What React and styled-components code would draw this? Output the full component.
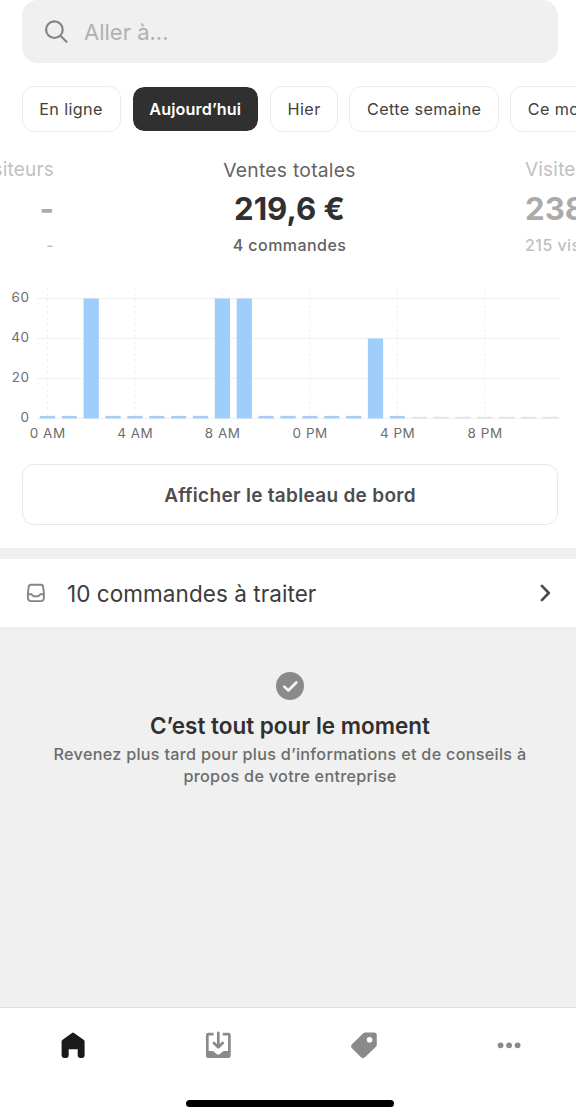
import React, { useState } from "react";
import styled, { createGlobalStyle } from "styled-components";

const periods = ["En ligne", "Aujourd’hui", "Hier", "Cette semaine", "Ce mois-ci"];

// sales per hour, null for the hours still to come
const sales = [
  0, 0, 60, 0, 0, 0, 0, 0, 60, 60, 0, 0, 0, 0, 0, 40, 0,
  null, null, null, null, null, null, null,
];
const hours = ["0 AM", "4 AM", "8 AM", "0 PM", "4 PM", "8 PM"];

const SalesChart = () => {
  const base = 133.5;
  const step = 21.87;
  const center = (i) => 47.4 + i * step;
  return (
    <Chart viewBox="0 0 576 160">
      {[0, 20, 40, 60].map((value) => (
        <g key={value}>
          <line
            x1="37"
            x2="561"
            y1={base - value * 2}
            y2={base - value * 2}
            stroke="#f0f0f0"
          />
          <text x="29.5" y={base - value * 2 + 3.7} textAnchor="end">
            {value}
          </text>
        </g>
      ))}
      {hours.map((hour, i) => (
        <g key={hour}>
          <line
            x1={center(i * 4)}
            x2={center(i * 4)}
            y1="2"
            y2={base}
            stroke="#f0f0f0"
            strokeDasharray="3 3"
          />
          <text x={center(i * 4) + 0.3} y="153.4" textAnchor="middle">
            {hour}
          </text>
        </g>
      ))}
      {sales.map((value, i) => {
        const height = value === null ? 1.7 : Math.max(value * 2, 2.6);
        return (
          <rect
            key={i}
            x={center(i) - 7.6}
            y={base - height}
            width="15.3"
            height={height}
            fill={value === null ? "#e2e2e2" : value ? "#a0cefb" : "#aacdf3"}
          />
        );
      })}
    </Chart>
  );
};

const App = () => {
  const [period, setPeriod] = useState("Aujourd’hui");

  return (
    <Screen>
      <GlobalStyle />
      <Search>
        <svg width="24" height="24" viewBox="0 0 24 24" fill="none" stroke="#848484" strokeWidth="2.2">
          <circle cx="10.4" cy="9.7" r="8.3" />
          <path d="M16.4 15.7l6.1 6.1" strokeLinecap="round" />
        </svg>
        <span>Aller à...</span>
      </Search>

      <Periods>
        {periods.map((name) => (
          <Chip key={name} $active={name === period} onClick={() => setPeriod(name)}>
            {name}
          </Chip>
        ))}
      </Periods>

      <Metrics>
        <Metric $side="left">
          <MetricName $small>Visiteurs</MetricName>
          <MetricValue>-</MetricValue>
          <MetricDetail>-</MetricDetail>
        </Metric>
        <Metric>
          <MetricName>Ventes totales</MetricName>
          <MetricValue>219,6 €</MetricValue>
          <MetricDetail>4 commandes</MetricDetail>
        </Metric>
        <Metric $side="right">
          <MetricName $small>Visiteurs</MetricName>
          <MetricValue>238</MetricValue>
          <MetricDetail>215 visiteurs</MetricDetail>
        </Metric>
      </Metrics>

      <SalesChart />

      <DashboardButton>Afficher le tableau de bord</DashboardButton>

      <OrdersRow>
        <svg width="20" height="20" viewBox="0 0 20 20" fill="none" stroke="#858585" strokeWidth="1.9">
          <path d="M5 1.8h9.8a2.3 2.3 0 0 1 2.3 2l.8 6.2v5.1a3 3 0 0 1-3 3H4.9a3 3 0 0 1-3-3V10l.8-6.2a2.3 2.3 0 0 1 2.3-2z" />
          <path d="M1.9 11.3h3.7l1.7 1.9h5.2l1.7-1.9h3.7" strokeLinejoin="round" />
        </svg>
        <OrdersText>10 commandes à traiter</OrdersText>
        <svg width="12" height="18" viewBox="0 0 12 18" fill="none" stroke="#4b4b4b" strokeWidth="2.7">
          <path d="M1.9 1.9L8.8 9l-6.9 7.1" strokeLinecap="round" strokeLinejoin="round" />
        </svg>
      </OrdersRow>

      <Empty>
        <svg width="28" height="28" viewBox="0 0 28 28">
          <circle cx="14" cy="14" r="14" fill="#8a8a8a" />
          <path
            d="M8.3 14.6l4 3.9 8-8"
            fill="none"
            stroke="#f4f4f4"
            strokeWidth="2.7"
            strokeLinecap="round"
            strokeLinejoin="round"
          />
        </svg>
        <EmptyTitle>C’est tout pour le moment</EmptyTitle>
        <EmptyText>
          Revenez plus tard pour plus d’informations et de conseils à
          <br />
          propos de votre entreprise
        </EmptyText>
      </Empty>

      <Footer>
        <Tabs>
          <Tab $active>
            <svg width="26" height="28" viewBox="0 0 26 28" fill="currentColor">
              <path d="M12 1.9a1.7 1.7 0 0 1 2 0l9.6 6.8a2.2 2.2 0 0 1 1 1.8v14.1a2.3 2.3 0 0 1-2.3 2.3h-2.3a2.3 2.3 0 0 1-2.3-2.3v-6.4H8.7v6.4a2.3 2.3 0 0 1-2.3 2.3H3.9a2.3 2.3 0 0 1-2.3-2.3V10.5a2.2 2.2 0 0 1 1-1.8z" />
            </svg>
          </Tab>
          <Tab>
            <svg width="26" height="28" viewBox="0 0 26 28" fill="none" stroke="currentColor" strokeWidth="2.7">
              <path d="M8.6 3.1H3.3a1 1 0 0 0-1 1v17M17.8 3.1h5.6a1 1 0 0 1 1 1v17" />
              <path d="M1 20h6.9l3.8 2.9a2.6 2.6 0 0 0 3.2 0l3.8-2.9h7v5a2 2 0 0 1-2 2H3a2 2 0 0 1-2-2z" fill="currentColor" stroke="none" />
              <path d="M13.3 1.8v14M8.9 12l4.4 4.3 4.4-4.3" strokeLinecap="round" strokeLinejoin="round" />
            </svg>
          </Tab>
          <Tab>
            <svg width="26" height="28" viewBox="0 0 26 28" fill="currentColor">
              <path
                fillRule="evenodd"
                d="M14.2 1.6h8.8a2.8 2.8 0 0 1 2.8 2.8v9.1a3.2 3.2 0 0 1-.9 2.2L14.2 26.1a3.2 3.2 0 0 1-4.5 0L1.2 17.6a3.2 3.2 0 0 1 0-4.5L12 2.5a3.2 3.2 0 0 1 2.2-.9zM18.6 5.9a2.8 2.8 0 1 0 0 5.6 2.8 2.8 0 0 0 0-5.6z"
              />
            </svg>
          </Tab>
          <Tab>
            <svg width="26" height="28" viewBox="0 0 26 28" fill="currentColor">
              <circle cx="4.6" cy="14.3" r="2.9" />
              <circle cx="13.1" cy="14.3" r="2.9" />
              <circle cx="21.6" cy="14.3" r="2.9" />
            </svg>
          </Tab>
        </Tabs>
        <HomeIndicator />
      </Footer>
    </Screen>
  );
};

export default App;

const GlobalStyle = createGlobalStyle`
  * {
    box-sizing: border-box;
  }
  body {
    margin: 0;
    background: #fff;
    font-family: Inter, "Liberation Sans", sans-serif;
  }
  button {
    font-family: inherit;
  }
  svg {
    flex-shrink: 0;
  }
`;

const Screen = styled.div`
  width: 576px;
  height: 1117px;
  display: flex;
  flex-direction: column;
  overflow: hidden;
`;

const Search = styled.div`
  height: 63px;
  margin: 0 18px 0 22px;
  padding: 1px 22px 0;
  display: flex;
  align-items: center;
  gap: 16px;
  flex-shrink: 0;
  border-radius: 16px;
  background: #f0f0f0;
  color: #b1b1b1;
  font-size: 22px;
`;

const Periods = styled.div`
  display: flex;
  gap: 11px;
  margin-top: 22.5px;
  padding-left: 21.5px;
`;

const Chip = styled.button`
  height: 46px;
  padding: 0 ${({ $active }) => ($active ? "16.8px" : "16.7px")};
  flex-shrink: 0;
  border: 1px solid ${({ $active }) => ($active ? "#fff" : "#ececec")};
  border-radius: 12px;
  background: ${({ $active }) => ($active ? "#303030" : "#fff")};
  background-clip: padding-box;
  color: ${({ $active }) => ($active ? "#fff" : "#414141")};
  font-size: 16.2px;
  font-weight: ${({ $active }) => ($active ? 600 : 400)};
  letter-spacing: ${({ $active }) => ($active ? "0.1px" : "0.38px")};
`;

const Metrics = styled.div`
  display: grid;
  grid-template-columns: 54px 471px 51px;
  margin-top: 24px;
`;

const Metric = styled.div`
  display: flex;
  flex-direction: column;
  align-items: ${({ $side }) =>
    $side === "left" ? "flex-end" : $side === "right" ? "flex-start" : "center"};
  opacity: ${({ $side }) => ($side ? 0.4 : 1)};
  white-space: nowrap;
`;

const MetricName = styled.div`
  color: #646464;
  font-size: ${({ $small }) => ($small ? "19px" : "19.3px")};
  letter-spacing: ${({ $small }) => ($small ? "0.2px" : "0.25px")};
  line-height: 28px;
`;

const MetricValue = styled.div`
  color: #303030;
  font-size: 31.2px;
  font-weight: 700;
  line-height: 50px;
`;

const MetricDetail = styled.div`
  color: #626262;
  font-size: 16px;
  font-weight: 500;
  letter-spacing: 0.45px;
  line-height: 22px;
`;

const Chart = styled.svg`
  width: 576px;
  height: 160px;
  margin-top: 29px;

  text {
    fill: #6e6e6e;
    font-size: 13.5px;
    letter-spacing: 0.5px;
  }
`;

const DashboardButton = styled.button`
  height: 61px;
  margin: 19px 18px 23px 22px;
  padding-top: 3px;
  flex-shrink: 0;
  border: 1px solid #e8e8e8;
  border-radius: 12px;
  background: #fff;
  color: #4d4d4d;
  font-size: 19px;
  font-weight: 600;
  letter-spacing: 0.3px;
`;

const OrdersRow = styled.div`
  height: 79px;
  padding: 0 24px 0 26px;
  display: flex;
  align-items: center;
  flex-shrink: 0;
  border-top: 11px solid #f0f0f0;
`;

const OrdersText = styled.div`
  flex: 1;
  margin: 1px 0 0 21px;
  color: #3c3c3c;
  font-size: 22.5px;
  letter-spacing: 0.06px;
`;

const Empty = styled.div`
  flex: 1;
  padding: 45px 0 0 4px;
  display: flex;
  flex-direction: column;
  align-items: center;
  background: #f0f0f0;
  text-align: center;
`;

const EmptyTitle = styled.div`
  margin-top: 11px;
  color: #303030;
  font-size: 22.5px;
  font-weight: 600;
  line-height: 30px;
`;

const EmptyText = styled.div`
  margin-top: 2px;
  color: #6c6c6c;
  font-size: 16.2px;
  font-weight: 500;
  letter-spacing: 0.29px;
  line-height: 22.4px;
  white-space: nowrap;
`;

const Footer = styled.div`
  height: 110px;
  flex-shrink: 0;
  border-top: 1px solid #dedede;
  background: #fff;
`;

const Tabs = styled.div`
  height: 74px;
  display: grid;
  grid-template-columns: repeat(4, 145.5px);
`;

const Tab = styled.div`
  display: flex;
  align-items: center;
  justify-content: center;
  color: ${({ $active }) => ($active ? "#1a1a1a" : "#8a8a8a")};
`;

const HomeIndicator = styled.div`
  width: 208px;
  height: 7px;
  margin: 18px 0 0 186px;
  border-radius: 4px;
  background: #000;
`;
